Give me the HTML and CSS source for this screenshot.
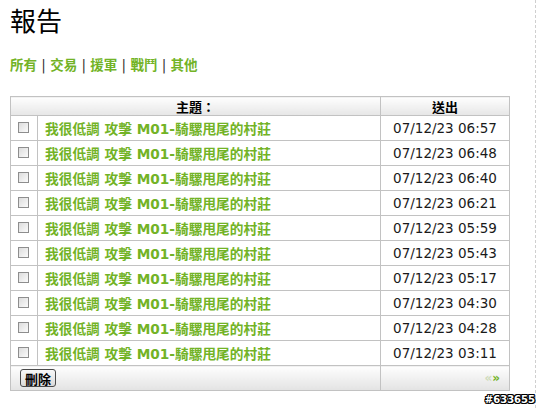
FILE: index.html
```html
<!DOCTYPE html>
<html lang="zh-Hant">
<head>
  <meta charset="UTF-8">
  <title>報告</title>
  <link rel="stylesheet" href="styles.css">
</head>
<body>
  <div class="page">
    <h1>報告</h1>

    <div class="menu">
      <a href="#">所有</a> | <a href="#">交易</a> | <a href="#">援軍</a> | <a href="#">戰鬥</a> | <a href="#">其他</a>
    </div>

    <table class="overview">
      <thead>
        <tr>
          <th colspan="2">主題：</th>
          <th class="sent">送出</th>
        </tr>
      </thead>
      <tbody>
        <tr><td class="sel"><input type="checkbox"></td><td class="sub"><a href="#">我很低調 攻擊 M01-騎騾甩尾的村莊</a></td><td class="dat">07/12/23 06:57</td></tr>
        <tr><td class="sel"><input type="checkbox"></td><td class="sub"><a href="#">我很低調 攻擊 M01-騎騾甩尾的村莊</a></td><td class="dat">07/12/23 06:48</td></tr>
        <tr><td class="sel"><input type="checkbox"></td><td class="sub"><a href="#">我很低調 攻擊 M01-騎騾甩尾的村莊</a></td><td class="dat">07/12/23 06:40</td></tr>
        <tr><td class="sel"><input type="checkbox"></td><td class="sub"><a href="#">我很低調 攻擊 M01-騎騾甩尾的村莊</a></td><td class="dat">07/12/23 06:21</td></tr>
        <tr><td class="sel"><input type="checkbox"></td><td class="sub"><a href="#">我很低調 攻擊 M01-騎騾甩尾的村莊</a></td><td class="dat">07/12/23 05:59</td></tr>
        <tr><td class="sel"><input type="checkbox"></td><td class="sub"><a href="#">我很低調 攻擊 M01-騎騾甩尾的村莊</a></td><td class="dat">07/12/23 05:43</td></tr>
        <tr><td class="sel"><input type="checkbox"></td><td class="sub"><a href="#">我很低調 攻擊 M01-騎騾甩尾的村莊</a></td><td class="dat">07/12/23 05:17</td></tr>
        <tr><td class="sel"><input type="checkbox"></td><td class="sub"><a href="#">我很低調 攻擊 M01-騎騾甩尾的村莊</a></td><td class="dat">07/12/23 04:30</td></tr>
        <tr><td class="sel"><input type="checkbox"></td><td class="sub"><a href="#">我很低調 攻擊 M01-騎騾甩尾的村莊</a></td><td class="dat">07/12/23 04:28</td></tr>
        <tr><td class="sel"><input type="checkbox"></td><td class="sub"><a href="#">我很低調 攻擊 M01-騎騾甩尾的村莊</a></td><td class="dat">07/12/23 03:11</td></tr>
      </tbody>
      <tfoot>
        <tr>
          <td colspan="2" class="actions"><button>刪除</button></td>
          <td class="pager"><span class="prev">&laquo;</span><span class="next">&raquo;</span></td>
        </tr>
      </tfoot>
    </table>

    <div class="mark">#633655</div>
  </div>
</body>
</html>
```

FILE: styles.css
```css
* {
  box-sizing: border-box;
}

body {
  margin: 0;
  background: #fff;
  color: #222;
  font-family: "DejaVu Sans", "Noto Sans CJK TC", sans-serif;
  font-size: 13px;
}

a {
  color: #72b326;
  font-weight: bold;
  text-decoration: none;
}

.page {
  position: relative;
  width: 536px;
  height: 408px;
  padding-left: 10px;
  border-right: 1px dashed #cfcfcf;
}

h1 {
  margin: 0;
  padding-top: 4px;
  font-family: "Noto Sans CJK TC", sans-serif;
  font-size: 26px;
  font-weight: normal;
  line-height: 32px;
  color: #000;
}

.menu {
  margin-top: 20px;
  line-height: 16px;
  font-size: 13.5px;
  color: #333;
}

.menu a {
  font-family: "Noto Sans CJK TC", sans-serif;
}

.overview {
  margin-top: 23px;
  width: 500px;
  border-collapse: collapse;
  border: 1px solid #c2c2c2;
}

.overview td,
.overview th {
  border: 1px solid #c2c2c2;
  padding: 0;
}

.overview th {
  height: 19px;
  background: linear-gradient(#fefefe, #e6e6e6);
  font-family: "Noto Sans CJK TC", sans-serif;
  font-size: 13px;
  font-weight: bold;
  color: #000;
  line-height: 17px;
}

.overview th.sent {
  width: 129px;
}

.overview tbody td {
  height: 25px;
  padding-bottom: 1px;
}

.sel {
  width: 27px;
  text-align: center;
}

.sel input {
  appearance: none;
  display: block;
  width: 11px;
  height: 11px;
  margin: 0 0 0 7px;
  border: 1px solid #8d8d8d;
  background: linear-gradient(135deg, #dcdcdc, #fbfbfb);
}

.sub {
  padding-left: 7px !important;
  font-size: 13.7px;
}

.dat {
  text-align: center;
  font-size: 13.5px;
  color: #1a1a1a;
}

.overview tfoot td {
  height: 25px;
  background: linear-gradient(#fefefe, #e3e3e3);
}

.actions {
  padding-left: 9px !important;
}

.actions button {
  display: block;
  height: 18px;
  width: 36px;
  padding: 0;
  border: 1px solid #4a4a4a;
  border-radius: 3px;
  background: linear-gradient(#f8f8f8, #dadada);
  font-family: "Noto Sans CJK TC", sans-serif;
  font-size: 13px;
  font-weight: bold;
  line-height: 15px;
  color: #000;
}

.pager {
  text-align: right;
  padding-right: 9px !important;
  font-size: 12px;
  font-weight: bold;
}

.prev {
  color: #cfdcbc;
}

.next {
  color: #72b326;
}

.mark {
  position: absolute;
  right: 0;
  bottom: 3px;
  font-family: "DejaVu Sans", sans-serif;
  font-size: 10px;
  font-weight: bold;
  color: #fff;
  text-shadow: 1px 0 0 #000, -1px 0 0 #000, 0 1px 0 #000, 0 -1px 0 #000, 1px 1px 0 #000, -1px -1px 0 #000, 1px -1px 0 #000, -1px 1px 0 #000;
}
```
